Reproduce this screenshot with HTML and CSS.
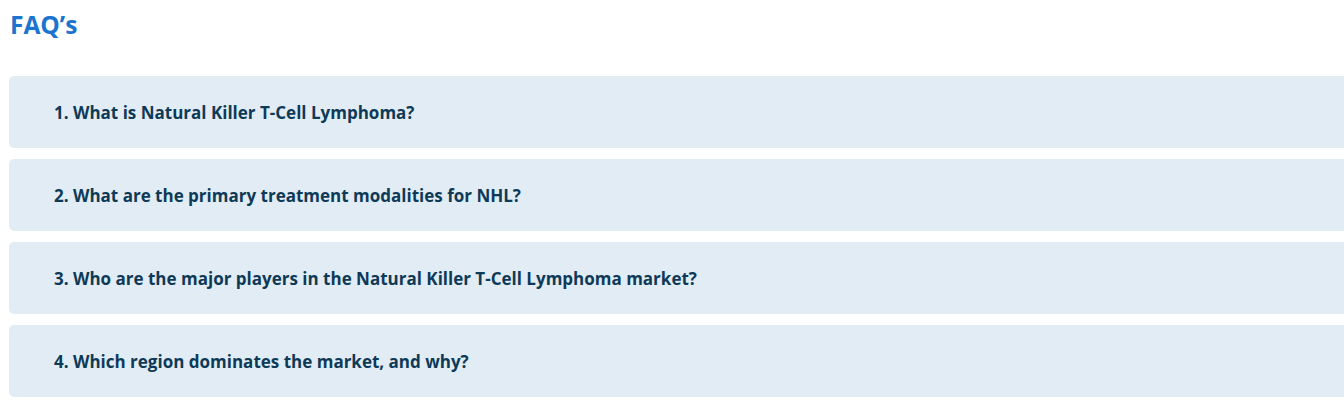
FILE: index.html
```html
<!DOCTYPE html>
<html>
<head>
<meta charset="utf-8">
<link rel="stylesheet" href="styles.css">
</head>
<body>
<section class="faq">
  <h2 class="faq-title">FAQ’s</h2>
  <div class="faq-list">
    <div class="faq-item">1. What is Natural Killer T-Cell Lymphoma?</div>
    <div class="faq-item">2. What are the primary treatment modalities for NHL?</div>
    <div class="faq-item">3. Who are the major players in the Natural Killer T-Cell Lymphoma market?</div>
    <div class="faq-item">4. Which region dominates the market, and why?</div>
  </div>
</section>
</body>
</html>
```
FILE: styles.css
```css
html, body {
  margin: 0;
  padding: 0;
  background: #ffffff;
  overflow: hidden;
}
.faq {
  padding: 8px 0 0 9px;
  font-family: "Open Sans", Lato, sans-serif;
}
.faq-title {
  margin: 0 0 0 1px;
  font-size: 24.5px;
  line-height: 34px;
  font-weight: 700;
  color: #1b74cf;
}
.faq-list {
  margin-top: 34px;
  margin-right: -20px;
  display: flex;
  flex-direction: column;
  gap: 11px;
}
.faq-item {
  height: 72px;
  display: flex;
  align-items: center;
  padding-left: 45px;
  background: #e2ecf5;
  border-radius: 5px;
  font-size: 17px;
  font-weight: 700;
  color: #0e3a58;
}
```
